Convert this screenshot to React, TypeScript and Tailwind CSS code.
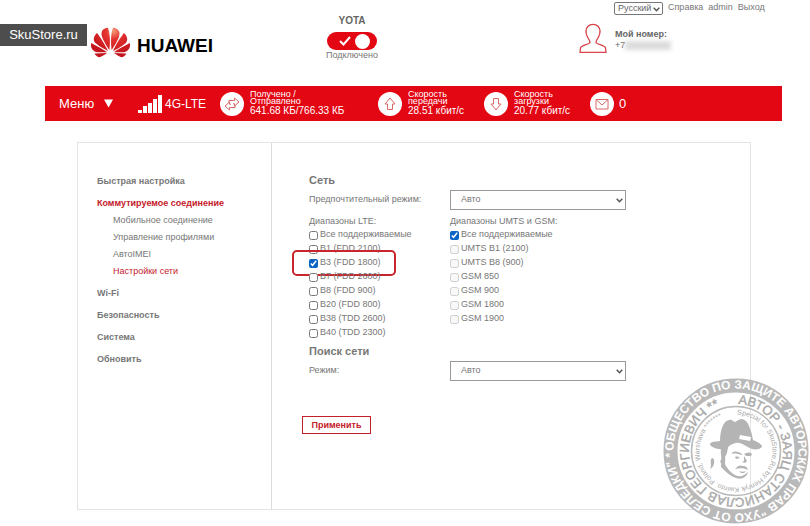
import { useState } from "react";
import { SiHuawei } from "react-icons/si";

const lteBands = [
  "Все поддерживаемые",
  "B1 (FDD 2100)",
  "B3 (FDD 1800)",
  "B7 (FDD 2600)",
  "B8 (FDD 900)",
  "B20 (FDD 800)",
  "B38 (TDD 2600)",
  "B40 (TDD 2300)",
];

const umtsBands = [
  "Все поддерживаемые",
  "UMTS B1 (2100)",
  "UMTS B8 (900)",
  "GSM 850",
  "GSM 900",
  "GSM 1800",
  "GSM 1900",
];

const connectionLinks = ["Мобильное соединение", "Управление профилями", "АвтоIMEI", "Настройки сети"];

function Chevron({ className }: { className: string }) {
  return (
    <svg
      className={`pointer-events-none absolute ${className}`}
      width="7"
      height="5"
      viewBox="0 0 7 5"
      fill="none"
      stroke="#555"
      strokeWidth="1.5"
      aria-hidden="true"
    >
      <path d="M0.7 0.8 L3.5 3.7 L6.3 0.8" />
    </svg>
  );
}

function Header() {
  const [connected, setConnected] = useState(true);
  return (
    <header className="flex h-[86px] pl-[46px]">
      <a href="#" aria-label="Huawei" className="mt-[24px] flex h-[36px] w-[237px] items-center gap-[7px] text-black">
        <svg width="0" height="0" className="absolute" aria-hidden="true">
          <defs>
            <radialGradient id="petal" gradientUnits="userSpaceOnUse" cx="14" cy="5" r="14">
              <stop offset="0" stopColor="#f29a78" />
              <stop offset="0.35" stopColor="#e5332f" />
              <stop offset="1" stopColor="#c4161f" />
            </radialGradient>
          </defs>
        </svg>
        <SiHuawei size={39} fill="url(#petal)" color="#d8232a" />
        <span className="pt-[8px] text-[19px] leading-[22px] font-bold">HUAWEI</span>
      </a>

      <div className="flex w-[48px] flex-col items-center pt-[15px]">
        <span className="text-[10px] leading-[12px] font-bold text-[#666]">YOTA</span>
        <button
          type="button"
          aria-label="Подключение"
          aria-pressed={connected}
          onClick={() => setConnected(!connected)}
          className="mt-[5px] flex h-[18px] w-[50px] shrink-0 items-center justify-end gap-[4px] rounded-full bg-[#e30613] pr-[7px]"
        >
          <svg width="12" height="10" viewBox="0 0 12 10" fill="none" stroke="#fff" strokeWidth="2">
            <path d="M1 5 L4.5 8.5 L11 1" />
          </svg>
          <span className="h-[15px] w-[15px] rounded-full bg-white" />
        </button>
        <span className="text-[9px] leading-[11px] text-[#777]">Подключено</span>
      </div>

      <div className="ml-auto flex w-[203px] flex-col">
        <nav className="flex h-[15px] items-center pt-px pl-[35px] text-[9px] text-[#777]">
          <span className="relative">
            <select
              aria-label="Язык"
              className="block h-[13px] w-[49px] appearance-none rounded-[2px] border border-[#777] bg-white pl-[3px] text-[9px] leading-[11px] text-[#666]"
            >
              <option>Русский</option>
              <option>English</option>
            </select>
            <Chevron className="top-[5px] right-[3px]" />
          </span>
          <a href="#" className="ml-[5px]">Справка</a>
          <a href="#" className="ml-[5px]">admin</a>
          <a href="#" className="ml-[5px]">Выход</a>
        </nav>
        <div className="flex pt-[8px]">
          <svg width="28" height="31" viewBox="0 0 28 31" fill="none" stroke="#d9444c" strokeWidth="1.3">
            <path d="M11 19.5 C11 17.5 9.5 16 8.5 14 C6.5 10 6.5 6 9 3.3 C11.5 0.6 16.5 0.6 19 3.3 C21.5 6 21.5 10 19.5 14 C18.5 16 17 17.5 17 19.5 C18 22 25 21.5 26.5 25 L27 29.3 H1 L1.5 25 C3 21.5 10 22 11 19.5 Z" />
          </svg>
          <div className="pt-[6px] pl-[8px] text-[#666]">
            <div className="text-[9px] leading-[11px] font-bold">Мой номер:</div>
            <div className="flex items-center text-[9px] leading-[10px]">
              +7
              <span className="h-[9px] w-[46px] bg-[#dcdcdc] blur-[2px]" />
            </div>
          </div>
        </div>
      </div>
    </header>
  );
}

function RoundIcon({ d }: { d: string }) {
  return (
    <span className="flex h-[24px] w-[24px] shrink-0 items-center justify-center rounded-full bg-white">
      <svg width="18" height="18" viewBox="0 0 18 18" fill="none" stroke="#d86a68" strokeWidth="1">
        <path d={d} />
      </svg>
    </span>
  );
}

function Stat({ d, first, second, value }: { d: string; first: string; second: string; value: string }) {
  return (
    <div className="flex items-center gap-[6px]">
      <RoundIcon d={d} />
      <div className="whitespace-nowrap text-[9px] leading-[7px]">
        <div>{first}</div>
        <div>{second}</div>
        <div className="text-[10px] leading-[12px]">{value}</div>
      </div>
    </div>
  );
}

function StatusBar() {
  return (
    <div className="flex h-[35px] items-center bg-[#e30613] pl-[14px] text-white">
      <button type="button" className="flex w-[79px] items-center gap-[10px] text-[13px] leading-[16px]">
        Меню
        <svg width="9" height="9" viewBox="0 0 9 9" fill="#fff">
          <path d="M0 0.5 H9 L4.5 8.5 Z" />
        </svg>
      </button>
      <div className="flex w-[82px] items-center gap-[3px]">
        <svg width="24" height="18" viewBox="0 0 24 18" fill="#fff">
          <path d="M0 15h4v3H0z M5 11h4v7H5z M10 8h4v10h-4z M15 4h4v14h-4z M20 0h4v18h-4z" />
        </svg>
        <span className="text-[12px] leading-[16px]">4G-LTE</span>
      </div>
      <div className="grid grid-cols-[158px_106px_106px_auto] items-center">
        <Stat
          d="M6 5.500 H11.500 V3 L16 7 L11.500 11 V8.800 H10 M12 12.500 H6.500 V15 L2 11 L6.500 7 V9.200 H8 M6 5.500 V7.500 M12 12.500 V10.500"
          first="Получено /"
          second="Отправлено"
          value="641.68 КБ/766.33 КБ"
        />
        <Stat d="M9 3 L14 9 H11.500 V14.500 H6.500 V9 H4 Z" first="Скорость" second="передачи" value="28.51 кбит/с" />
        <Stat d="M9 15 L14 9 H11.500 V3.500 H6.500 V9 H4 Z" first="Скорость" second="загрузки" value="20.77 кбит/с" />
        <div className="flex items-center gap-[5px] text-[13px]">
          <RoundIcon d="M3 4.500 H15 V14 H3 Z M3 4.500 L9 10 L15 4.500" />
          <span>0</span>
        </div>
      </div>
    </div>
  );
}

function Sidebar() {
  return (
    <nav className="w-[194px] shrink-0 border-r border-[#dcdcdc] pt-[27px] pl-[19px] text-[9px] leading-[22px] font-bold text-[#777]">
      <a href="#" className="block">Быстрая настройка</a>
      <a href="#" className="block text-[#c4202b]">Коммутируемое соединение</a>
      <ul className="-mt-[2px] pb-[2px] pl-[16px] leading-[17px] font-normal">
        {connectionLinks.map((label) => (
          <li key={label}>
            <a href="#" className={label === "Настройки сети" ? "text-[#c4202b]" : ""}>{label}</a>
          </li>
        ))}
      </ul>
      <a href="#" className="block">Wi-Fi</a>
      <a href="#" className="block">Безопасность</a>
      <a href="#" className="block">Система</a>
      <a href="#" className="block">Обновить</a>
    </nav>
  );
}

function BandList({ title, bands, checked, locked }: { title: string; bands: string[]; checked: string; locked: boolean }) {
  const [selected, setSelected] = useState([checked]);
  return (
    <fieldset>
      <legend className="leading-[14px]">{title}</legend>
      {bands.map((band) => (
        <div key={band} className="relative">
          <label className="flex h-[14px] items-center gap-[2px] whitespace-nowrap">
            <input
              type="checkbox"
              className="h-[9px] w-[9px] accent-[#0b63c4]"
              checked={selected.includes(band)}
              disabled={locked && band !== checked}
              onChange={() =>
                setSelected(selected.includes(band) ? selected.filter((b) => b !== band) : [...selected, band])
              }
            />
            {band}
          </label>
          {band === "B3 (FDD 1800)" && (
            <span className="pointer-events-none absolute -top-[6px] -left-[17px] h-[26px] w-[104px] rounded-[5px] border-2 border-[#c8262c]" />
          )}
        </div>
      ))}
    </fieldset>
  );
}

function ModeRow({ id, label, options }: { id: string; label: string; options: string[] }) {
  return (
    <div className="grid grid-cols-[141px_176px] items-center">
      <label htmlFor={id}>{label}</label>
      <span className="relative">
        <select
          id={id}
          className="block h-[20px] w-full appearance-none border border-[#999] bg-white pl-[10px] text-[9px] text-[#777]"
        >
          {options.map((option) => (
            <option key={option}>{option}</option>
          ))}
        </select>
        <Chevron className="top-[8px] right-[3px]" />
      </span>
    </div>
  );
}

function NetworkSettings() {
  return (
    <form className="flex-1 pt-[28px] pl-[37px] text-[9px] text-[#777]">
      <h2 className="pb-px text-[11px] leading-[18px] font-bold">Сеть</h2>
      <ModeRow id="mode" label="Предпочтительный режим:" options={["Авто", "4G", "3G", "2G"]} />
      <div className="mt-[4px] grid grid-cols-[141px_176px]">
        <BandList title="Диапазоны LTE:" bands={lteBands} checked="B3 (FDD 1800)" locked={false} />
        <BandList title="Диапазоны UMTS и GSM:" bands={umtsBands} checked="Все поддерживаемые" locked />
      </div>
      <h2 className="mt-[2px] pb-px text-[11px] leading-[18px] font-bold">Поиск сети</h2>
      <ModeRow id="search" label="Режим:" options={["Авто", "Вручную"]} />
      <button
        type="button"
        className="mt-[35px] -ml-[7px] h-[18px] w-[69px] border border-[#c4202b] text-[9px] leading-[16px] font-bold text-[#c4202b]"
      >
        Применить
      </button>
    </form>
  );
}

function Stamp() {
  return (
    <svg
      className="pointer-events-none absolute right-px bottom-[2px] h-[146px] w-[146px]"
      viewBox="-73 -73 146 146"
      fontFamily="'Liberation Sans', Arial, sans-serif"
    >
      <defs>
        <path id="ringOuter" d="M-62.500 0 A62.500 62.500 0 0 1 62.500 0 A62.500 62.500 0 0 1 -62.500 0" />
        <path id="ringMiddle" d="M0 -47 A47 47 0 0 1 0 47 A47 47 0 0 1 0 -47" />
        <path id="ringInner" d="M0 -36.500 A36.500 36.500 0 0 1 0 36.500 A36.500 36.500 0 0 1 0 -36.500" />
      </defs>
      <circle r="65.500" fill="none" stroke="#b9b9b9" strokeWidth="14" />
      <circle r="44.500" fill="none" stroke="#b9b9b9" strokeWidth="1.500" />
      <text fontSize="12" fontWeight="bold" fill="#fff">
        <textPath href="#ringOuter">ОБЩЕСТВО ПО ЗАЩИТЕ АВТОРСКИХ ПРАВ "УХО ОТ СЕЛЕДКИ" *</textPath>
      </text>
      <text fontSize="13" fill="#a9a9a9" stroke="#a9a9a9" strokeWidth="0.4">
        <textPath href="#ringMiddle" startOffset="2">АВТОР - ЗАЯЦ СТАНИСЛАВ ГЕОРГИЕВИЧ **</textPath>
      </text>
      <text fontSize="7" fill="#a9a9a9">
        <textPath href="#ringInner" startOffset="1">Special for SkuStore.Ru by Henryk Kwinto. Poland. Warshava *******</textPath>
      </text>
      <g fill="#b4b4b4">
        <path d="M-16 -10 C-16 -20 -13 -30 -7 -31 C-4 -32 -3 -29 -1 -29 C2 -31 4 -32 6 -32 C11 -31 13 -26 14 -22 C16 -18 16 -15 17 -11 C22 -9 25 -7 26 -5 C26 -2 20 -1 16 -2 C10 -4 6 -9 0 -8 C-6 -7 -8 -3 -13 -2 C-18 -1 -26 -4 -26 -7 C-25 -10 -20 -9 -16 -10 Z" />
        <path d="M-15 -2 C-12 -3 -9 -5 -7 -6 C-9 -2 -8 2 -11 6 C-10 9 -12 12 -10 15 C-7 20 -4 22 -1 24 C4 27 9 24 12 21 C11 26 6 29 0 27 C-6 25 -10 21 -14 17 C-16 16 -14 13 -16 10 C-13 8 -16 4 -15 -2 Z" />
        <path d="M-25 8 C-23 6 -21 9 -22 12 C-22 15 -24 17 -26 18 C-24 15 -26 12 -25 8 Z" />
        <path d="M-4 2 C-1 -1 3 1 6 3 L6 4 C2 3 -1 2 -4 3 Z M-1 6 C1 5 3 6 4 7 L0 8 Z M8 3 C11 1 14 1 16 3 L15 5 L10 5 Z" />
        <path d="M8 5 L11 10 L9 12 L6 11 L8 10 Z M-1 18 C2 14 5 14 7 15 C10 15 11 16 12 19 C8 17 4 17 -1 18 Z M3 20 C5 21 8 21 10 20 L8 22 L5 22 Z" />
        <path d="M4 -16 L15 -14 L14 -10 L3 -12 Z" fill="#fff" />
      </g>
    </svg>
  );
}

export default function App() {
  return (
    <div className="relative min-h-screen overflow-hidden bg-white pr-[28px] pl-[45px] font-['Liberation_Sans',Arial,sans-serif]">
      <a
        href="#"
        className="absolute top-[24px] left-0 flex h-[22px] w-[87px] items-center justify-center bg-[#4d4d4d] text-[13px] text-white"
      >
        SkuStore.ru
      </a>
      <Header />
      <StatusBar />
      <main className="mt-[21px] mr-[31px] ml-[32px] flex min-h-[368px] border border-[#e4e4e4]">
        <Sidebar />
        <NetworkSettings />
      </main>
      <Stamp />
    </div>
  );
}
